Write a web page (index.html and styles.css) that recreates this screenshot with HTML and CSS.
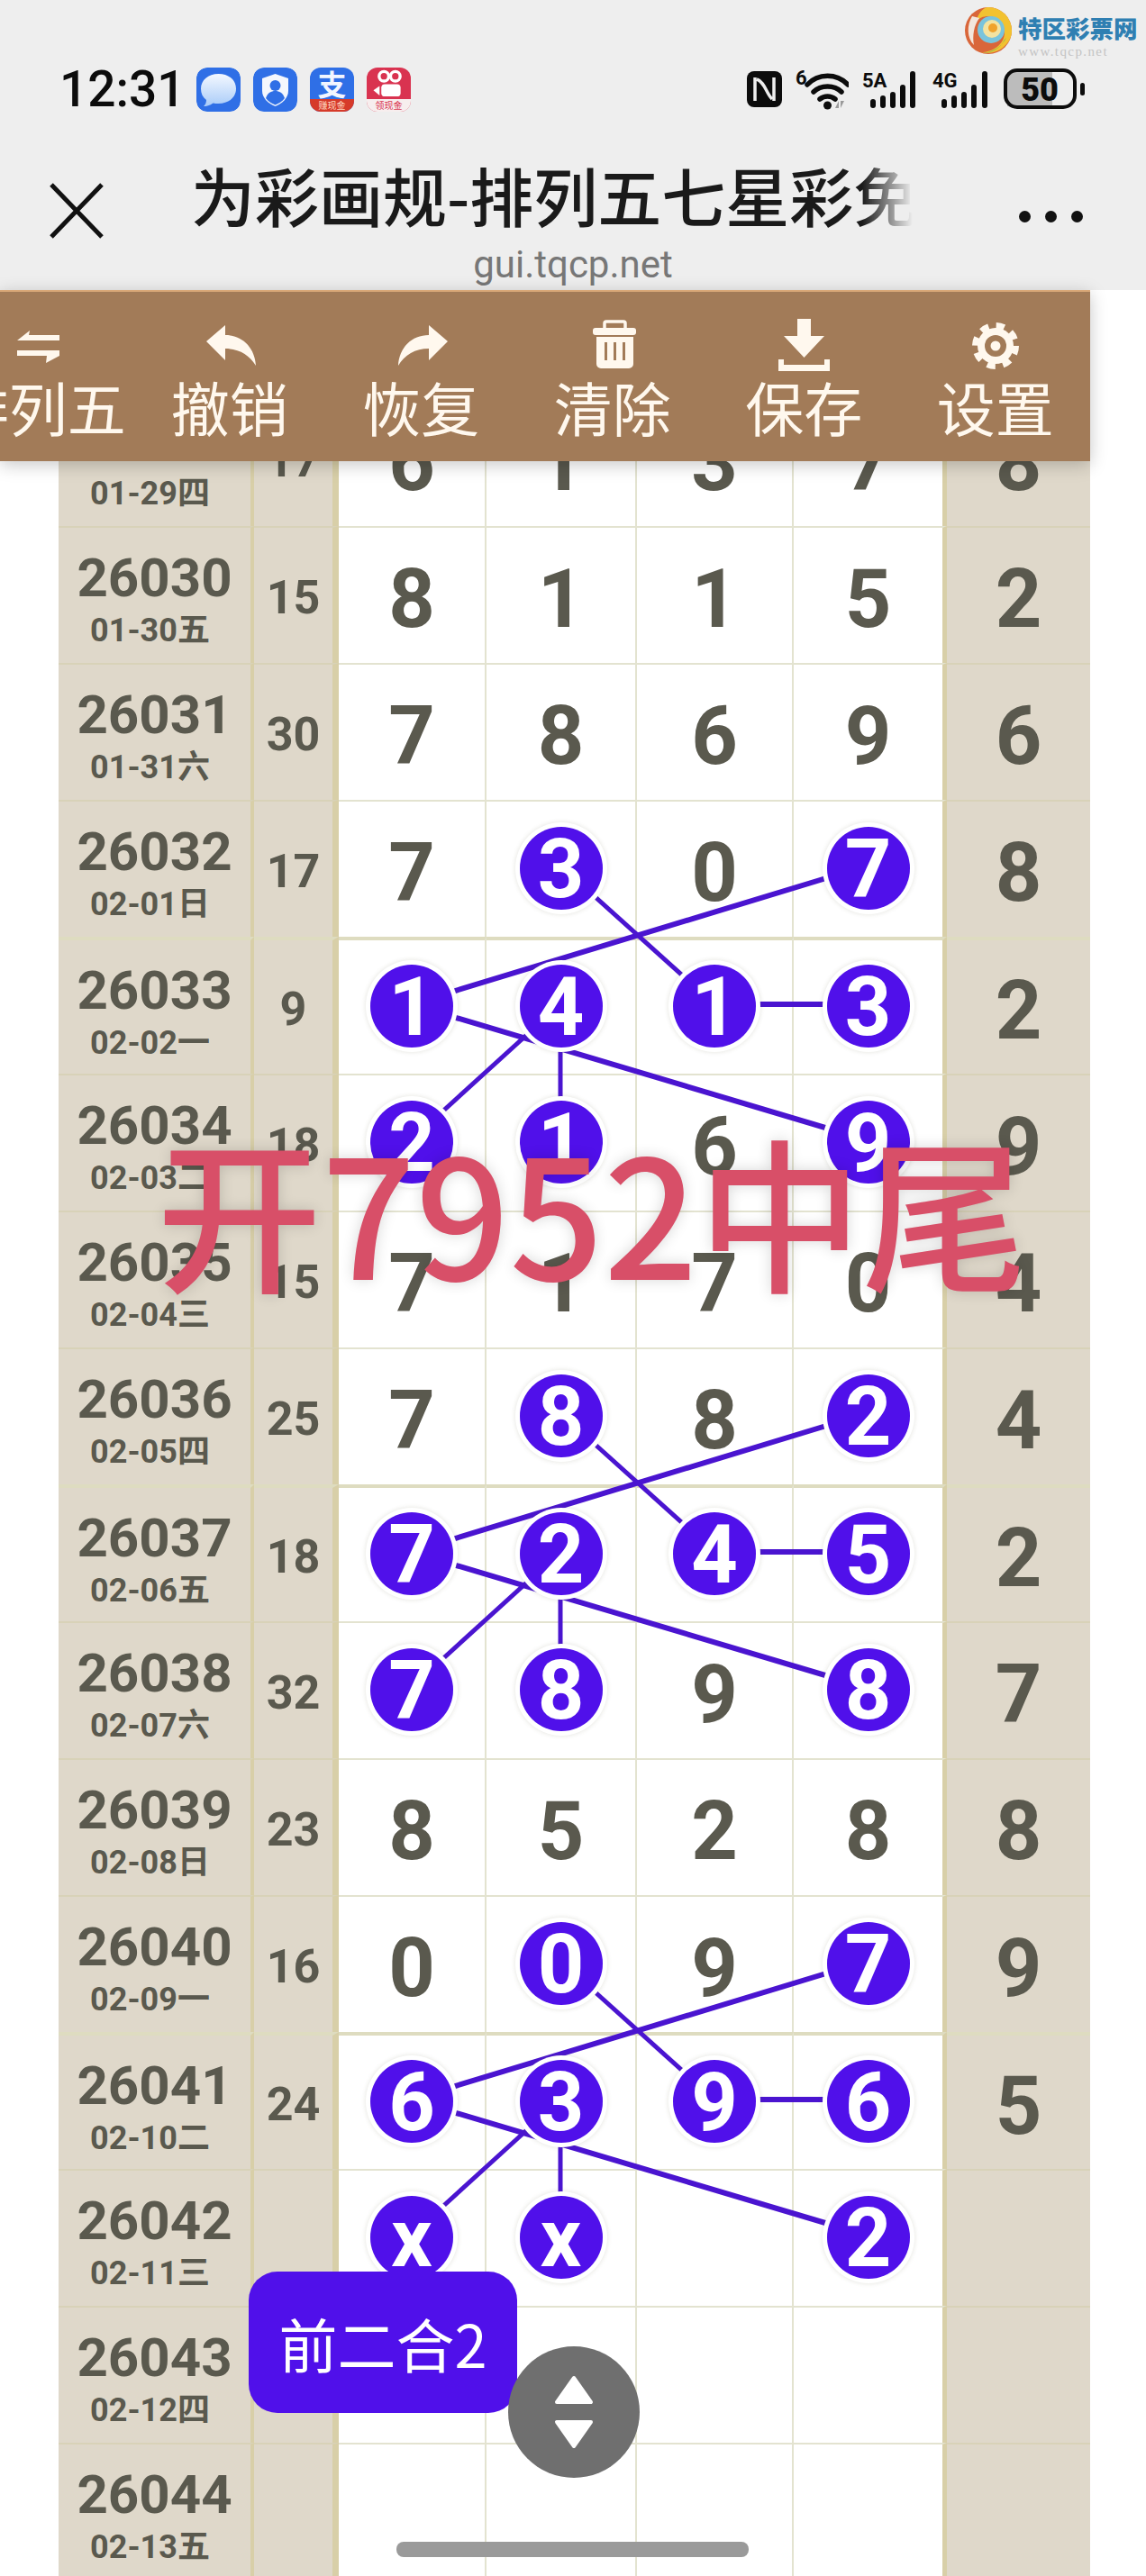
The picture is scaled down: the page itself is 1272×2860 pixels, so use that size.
FILE: index.html
```html
<!DOCTYPE html>
<html>
<head>
<meta charset="UTF-8">
<title>为彩画规-排列五七星彩免费</title>
<link rel="stylesheet" href="styles.css">
</head>
<body>
<div id="phone">

	<!-- top of the browser -->
	<div id="head">
		<div class="mark">
			<svg class="mark-logo" width="52" height="52" viewBox="0 0 52 52">
				<circle cx="26" cy="26" r="26" fill="#d9663a"/>
				<path d="M26 0a26 26 0 0 1 26 26c0 8-4 14-10 19-6 5-16 7-24 5 12 0 26-8 26-22 0-10-8-18-18-18-6 0-10 2-14 6 3-9 8-16 14-16z" fill="#f2c230"/>
				<path d="M44 36c-4 9-14 15-24 15 10-1 20-6 26-17z" fill="#5fb56c"/>
				<circle cx="29" cy="25" r="15" fill="#7ac4dc"/>
				<circle cx="30" cy="24" r="10" fill="#f4e3a0"/>
				<circle cx="31" cy="23" r="5" fill="#f0a32c"/>
				<path d="M8 10c-6 10-6 24 2 32-2-10 0-22 6-30z" fill="#f3e6dc"/>
			</svg>
			<div class="mark-text">
				<div class="mark-name">特区彩票网</div>
				<div class="mark-url">www.tqcp.net</div>
			</div>
		</div>

		<div id="status">
			<span class="time">12:31</span>
			<div class="apps">
				<svg class="app" viewBox="0 0 49 49">
					<defs><linearGradient id="bubble" x1="0" y1="0" x2="0" y2="1"><stop offset="0" stop-color="#f4f8ff"/><stop offset="1" stop-color="#a9ccf8"/></linearGradient></defs>
					<rect width="49" height="49" rx="12" fill="#2f6fe6"/>
					<path d="M24.5 7C36 7 44 14 44 23.500S36 40 24.500 40c-2 0-4 0-6-.6C15 42 11 43 8 43c2-2 3-4 3-7-4-3-6-7-6-12.500C5 14 13 7 24.500 7z" fill="url(#bubble)"/>
				</svg>
				<svg class="app" viewBox="0 0 49 49">
					<rect width="49" height="49" rx="12" fill="#2f6fe6"/>
					<path d="M24.500 7L39 12V26C39 34 32 40 24.500 43 17 40 10 34 10 26V12Z" fill="#f4f7fd"/>
					<circle cx="24.500" cy="20" r="6" fill="#2f6fe6"/>
					<path d="M14 34c2-6 6-8 10.500-8S33 28 35 34c-3 4-7 6-10.500 7.500C21 40 17 38 14 34z" fill="#2f6fe6"/>
				</svg>
				<div class="app app-pay">
					<span class="pay-top">支</span>
					<span class="pay-band">赚现金</span>
				</div>
				<div class="app app-kwai">
					<svg class="kwai-top" viewBox="0 0 49 36">
						<circle cx="19" cy="10" r="5.500" fill="none" stroke="#fff" stroke-width="3.500"/>
						<circle cx="32" cy="10" r="5.500" fill="none" stroke="#fff" stroke-width="3.500"/>
						<rect x="16" y="19" width="22" height="14" rx="4" fill="#fff"/>
						<path d="M7 26L14 21V32Z" fill="#fff"/>
					</svg>
					<span class="kwai-band">领现金</span>
				</div>
			</div>

			<div class="sys">
				<svg width="39" height="40" viewBox="0 0 39 40">
					<rect width="39" height="40" rx="8" fill="#0c0c0c"/>
					<path d="M9 7V33M30 7V33M11 9C20 12 21 24 28 31" fill="none" stroke="#eee" stroke-width="3.500"/>
				</svg>
				<svg width="59" height="46" viewBox="0 0 59 46">
					<text class="sys-tag" x="0" y="18">6</text>
					<path d="M13 18C25 5 46 5 58 18M20 26C28 18 43 18 51 26M27 34C32 30 39 30 44 34" fill="none" stroke="#0c0c0c" stroke-width="5.500" stroke-linecap="round"/>
					<circle cx="35.500" cy="41" r="4.500" fill="#0c0c0c"/>
					<path d="M44 44H48V36ZM50 36H54L50 44Z" fill="#9a9a9a"/>
				</svg>
				<svg width="60" height="46" viewBox="0 0 60 46">
					<text class="sys-tag" x="0" y="21">5A</text>
					<rect x="9" y="34" width="6" height="10" rx="3"/><rect x="20" y="30" width="6" height="14" rx="3"/><rect x="31" y="26" width="6" height="18" rx="3"/><rect x="42" y="18" width="6" height="26" rx="3"/><rect x="53" y="3" width="6" height="41" rx="3"/>
				</svg>
				<svg width="62" height="46" viewBox="0 0 62 46">
					<text class="sys-tag" x="0" y="21">4G</text>
					<rect x="10" y="34" width="6" height="10" rx="3"/><rect x="21" y="30" width="6" height="14" rx="3"/><rect x="32" y="26" width="6" height="18" rx="3"/><rect x="43" y="18" width="6" height="26" rx="3"/><rect x="55" y="3" width="6" height="41" rx="3"/>
				</svg>
				<svg width="90" height="46" viewBox="0 0 90 46">
					<rect x="4" y="4" width="50" height="38" fill="#bcbcbc"/>
					<rect x="2" y="2" width="77" height="41" rx="13" fill="none" stroke="#0c0c0c" stroke-width="4"/>
					<text class="sys-batt" x="40" y="36" text-anchor="middle">50</text>
					<rect x="85" y="16" width="5" height="14" rx="2.500"/>
				</svg>
			</div>
		</div>

		<div id="nav">
			<svg class="close" width="60" height="62" viewBox="0 0 60 62">
				<path d="M2 2L58 60M58 2L2 60" fill="none" stroke="#111" stroke-width="5"/>
			</svg>
			<div class="title">为彩画规-排列五七星彩免费</div>
			<div class="dots"><i></i><i></i><i></i></div>
		</div>
		<div class="url">gui.tqcp.net</div>
	</div>

	<!-- chart -->
	<div id="page">
		<div id="tools">
			<div class="tool">
				<svg width="60" height="60" viewBox="0 0 60 60"><path d="M7 26L21 15L20 20H54V26ZM7 37H54V43L39 51L40 43H7Z"/></svg>
				<span>排列五</span>
			</div>
			<div class="tool">
				<svg width="60" height="60" viewBox="0 0 60 60"><path d="M4 27L25 9V20C44 20 58 34 59 54C52 42 40 35 25 35V48Z"/></svg>
				<span>撤销</span>
			</div>
			<div class="tool">
				<svg width="60" height="60" viewBox="0 0 60 60"><path d="M60 27L39 9V20C20 20 6 34 5 54C12 42 24 35 39 35V48Z"/></svg>
				<span>恢复</span>
			</div>
			<div class="tool">
				<svg width="60" height="60" viewBox="0 0 60 60"><path d="M21 12V7a2 2 0 0 1 2-2H42a2 2 0 0 1 2 2V12" fill="none" stroke="#fff8ee" stroke-width="3.500"/><rect x="8" y="12" width="48" height="8" rx="3"/><path fill-rule="evenodd" d="M12 22H53V52a5 5 0 0 1-5 5H17a5 5 0 0 1-5-5ZM21 28V48H24V28ZM31 28V48H34V28ZM41 28V48H44V28Z"/></svg>
				<span>清除</span>
			</div>
			<div class="tool">
				<svg width="60" height="60" viewBox="0 0 60 60"><path d="M23 2H38V21H53L30.500 45L8 21H23ZM2 47H8V53H53V47H59V60H2Z"/></svg>
				<span>保存</span>
			</div>
			<div class="tool">
				<svg width="60" height="60" viewBox="0 0 60 60">
					<circle cx="30" cy="32" r="20"/>
					<circle cx="30" cy="32" r="22" fill="none" stroke="#fff8ee" stroke-width="8" stroke-dasharray="9 8.280"/>
					<circle cx="30" cy="32" r="12" fill="#a27b58"/>
					<circle cx="30" cy="32" r="5.500"/>
				</svg>
				<span>设置</span>
			</div>
		</div>

		<div id="board">
			<svg class="links" width="1145" height="2432" viewBox="0 0 1145 2432">
				<defs>
					<g id="cross">
						<path class="wide" d="M898 529L391 683"/>
						<path d="M557 529L728 683"/>
						<path class="wide" d="M728 683H898"/>
						<path d="M557 683L391 834"/>
						<path d="M557 683V834"/>
						<path class="wide" d="M391 683L898 834"/>
					</g>
				</defs>
				<use href="#cross"/>
				<use href="#cross" y="608"/>
				<use href="#cross" y="1216"/>
			</svg>

			<div class="row"><div class="no"><b>26029</b><small>01-29四</small></div><div class="sum">17</div><div class="n">6</div><div class="n">1</div><div class="n">3</div><div class="n last">7</div><div class="tail">8</div></div>
			<div class="row"><div class="no"><b>26030</b><small>01-30五</small></div><div class="sum">15</div><div class="n">8</div><div class="n">1</div><div class="n">1</div><div class="n last">5</div><div class="tail">2</div></div>
			<div class="row"><div class="no"><b>26031</b><small>01-31六</small></div><div class="sum">30</div><div class="n">7</div><div class="n">8</div><div class="n">6</div><div class="n last">9</div><div class="tail">6</div></div>
			<div class="row"><div class="no"><b>26032</b><small>02-01日</small></div><div class="sum">17</div><div class="n">7</div><div class="n"><span class="ball">3</span></div><div class="n">0</div><div class="n last"><span class="ball">7</span></div><div class="tail">8</div></div>
			<div class="row thick"><div class="no"><b>26033</b><small>02-02一</small></div><div class="sum">9</div><div class="n"><span class="ball">1</span></div><div class="n"><span class="ball">4</span></div><div class="n"><span class="ball">1</span></div><div class="n last"><span class="ball">3</span></div><div class="tail">2</div></div>
			<div class="row"><div class="no"><b>26034</b><small>02-03二</small></div><div class="sum">18</div><div class="n"><span class="ball">2</span></div><div class="n"><span class="ball">1</span></div><div class="n">6</div><div class="n last"><span class="ball">9</span></div><div class="tail">9</div></div>
			<div class="row"><div class="no"><b>26035</b><small>02-04三</small></div><div class="sum">15</div><div class="n">7</div><div class="n">1</div><div class="n">7</div><div class="n last">0</div><div class="tail">4</div></div>
			<div class="row"><div class="no"><b>26036</b><small>02-05四</small></div><div class="sum">25</div><div class="n">7</div><div class="n"><span class="ball">8</span></div><div class="n">8</div><div class="n last"><span class="ball">2</span></div><div class="tail">4</div></div>
			<div class="row thick"><div class="no"><b>26037</b><small>02-06五</small></div><div class="sum">18</div><div class="n"><span class="ball">7</span></div><div class="n"><span class="ball">2</span></div><div class="n"><span class="ball">4</span></div><div class="n last"><span class="ball">5</span></div><div class="tail">2</div></div>
			<div class="row"><div class="no"><b>26038</b><small>02-07六</small></div><div class="sum">32</div><div class="n"><span class="ball">7</span></div><div class="n"><span class="ball">8</span></div><div class="n">9</div><div class="n last"><span class="ball">8</span></div><div class="tail">7</div></div>
			<div class="row"><div class="no"><b>26039</b><small>02-08日</small></div><div class="sum">23</div><div class="n">8</div><div class="n">5</div><div class="n">2</div><div class="n last">8</div><div class="tail">8</div></div>
			<div class="row"><div class="no"><b>26040</b><small>02-09一</small></div><div class="sum">16</div><div class="n">0</div><div class="n"><span class="ball">0</span></div><div class="n">9</div><div class="n last"><span class="ball">7</span></div><div class="tail">9</div></div>
			<div class="row thick"><div class="no"><b>26041</b><small>02-10二</small></div><div class="sum">24</div><div class="n"><span class="ball">6</span></div><div class="n"><span class="ball">3</span></div><div class="n"><span class="ball">9</span></div><div class="n last"><span class="ball">6</span></div><div class="tail">5</div></div>
			<div class="row"><div class="no"><b>26042</b><small>02-11三</small></div><div class="sum"></div><div class="n"><span class="ball">x</span></div><div class="n"><span class="ball">x</span></div><div class="n"></div><div class="n last"><span class="ball">2</span></div><div class="tail"></div></div>
			<div class="row"><div class="no"><b>26043</b><small>02-12四</small></div><div class="sum"></div><div class="n"></div><div class="n"></div><div class="n"></div><div class="n last"></div><div class="tail"></div></div>
			<div class="row"><div class="no"><b>26044</b><small>02-13五</small></div><div class="sum"></div><div class="n"></div><div class="n"></div><div class="n"></div><div class="n last"></div><div class="tail"></div></div>
		</div>
	</div>

	<div class="stamp">开7952中尾</div>
	<div class="tip">前二合2</div>
	<div class="updown">
		<svg width="44" height="82" viewBox="0 0 44 82">
			<path d="M22 3L41 30H3ZM3 52H41L22 79Z" fill="#fff" stroke="#fff" stroke-width="4" stroke-linejoin="round"/>
		</svg>
	</div>
	<div class="homebar"></div>
</div>
</body>
</html>
```

FILE: styles.css
```css
html, body {
	margin: 0;
	background-color: #ffffff;
}

#phone {
	position: relative;
	width: 1272px;
	height: 2860px;
	overflow: hidden;
	font-family: Roboto, "Noto Sans CJK SC", sans-serif;
}

/* browser head */
#head {
	position: relative;
	height: 322px;
	background-color: #eeeeee;
	box-sizing: border-box;
	padding-top: 74px;
}

.mark {
	position: absolute;
	top: 8px;
	left: 1071px;
	display: flex;
	gap: 7px;
}

.mark-name {
	margin-top: 8px;
	font-family: "Noto Sans CJK SC", sans-serif;
	font-size: 26.500px;
	font-weight: 900;
	line-height: 30px;
	white-space: nowrap;
	color: #2f7fb2;
}

.mark-url {
	margin-top: 3px;
	font-family: "Liberation Serif", serif;
	font-size: 15px;
	line-height: 16px;
	letter-spacing: 1.400px;
	color: #c4c4c4;
}

#status {
	display: flex;
	align-items: center;
	height: 50px;
	padding-left: 66px;
}

.time {
	width: 132px;
	font-size: 55px;
	font-weight: 500;
	color: #0c0c0c;
	white-space: nowrap;
}

.apps {
	display: flex;
	gap: 14px;
	margin-left: 20px;
}

.app {
	display: block;
	width: 49px;
	height: 49px;
	border-radius: 12px;
	overflow: hidden;
}

.app-pay {
	background-color: #2f6fe6;
	text-align: center;
}

.pay-top {
	display: block;
	height: 35px;
	font-family: "Noto Sans CJK SC", sans-serif;
	font-size: 32px;
	font-weight: 700;
	line-height: 35px;
	color: #f2f6ff;
}

.pay-band, .kwai-band {
	display: block;
	height: 14px;
	font-family: "Noto Sans CJK SC", sans-serif;
	font-size: 10px;
	line-height: 14px;
	text-align: center;
}

.pay-band {
	background-color: #d63a2a;
	color: #ffd9c0;
}

.app-kwai {
	background-color: #d93350;
}

.kwai-top {
	display: block;
	width: 49px;
	height: 35px;
}

.kwai-band {
	background-color: #f7eeee;
	color: #d93350;
}

.sys {
	display: flex;
	align-items: center;
	gap: 15px;
	margin-left: auto;
	margin-right: 68px;
}

.sys svg {
	display: block;
	fill: #0c0c0c;
}

.sys svg:nth-child(4) {
	margin-left: 3px;
}

.sys svg:nth-child(5) {
	margin-left: 2px;
}

.sys-tag {
	font-size: 22px;
	font-weight: 700;
}

.sys-batt {
	font-size: 36px;
	font-weight: 900;
}

#nav {
	display: flex;
	align-items: center;
	height: 80px;
	margin-top: 51px;
}

.close {
	margin-left: 55px;
	margin-top: 38px;
	flex: none;
}

.title {
	width: 801px;
	margin-left: 97px;
	font-family: "Noto Sans CJK SC", sans-serif;
	font-size: 71px;
	font-weight: 500;
	line-height: 80px;
	color: #1a1a1a;
	white-space: nowrap;
	overflow: hidden;
	-webkit-mask-image: linear-gradient(to right, #000 93%, transparent);
	mask-image: linear-gradient(to right, #000 93%, transparent);
}

.dots {
	display: flex;
	gap: 16px;
	margin-left: 118px;
	margin-top: 50px;
}

.dots i {
	width: 13px;
	height: 13px;
	border-radius: 50%;
	background-color: #111111;
}

.url {
	margin-top: 14px;
	font-size: 42px;
	line-height: 50px;
	text-align: center;
	color: #777777;
}

/* tool bar over the chart */
#page {
	position: relative;
}

#tools {
	position: absolute;
	top: 0;
	left: 0;
	z-index: 5;
	display: flex;
	width: 1210px;
	height: 190px;
	box-sizing: border-box;
	border-top: 2px solid #d9a878;
	background-color: #a27b58;
	box-shadow: 0 4px 18px rgba(0, 0, 0, 0.22);
	overflow: hidden;
}

.tool {
	flex: none;
	display: flex;
	flex-direction: column;
	align-items: center;
	width: 212.500px;
	padding-top: 28px;
	color: #fff8ee;
}

.tool:first-child {
	margin-left: -64px;
}

.tool svg {
	fill: #fff8ee;
}

.tool span {
	font-family: "Noto Sans CJK SC", sans-serif;
	font-size: 65px;
	line-height: 78px;
	white-space: nowrap;
}

/* chart */
#board {
	position: relative;
	width: 1145px;
	margin-left: 65px;
	padding-top: 110px;
}

.links {
	position: absolute;
	top: 110px;
	left: 0;
	z-index: 1;
}

.links path {
	fill: none;
	stroke: #4a14d0;
	stroke-width: 5px;
}

.links .wide {
	stroke-width: 6px;
}

.row {
	display: grid;
	grid-template-columns: 217px 94px 164px 167px 174px 170px 159px;
	height: 152px;
	box-sizing: border-box;
	color: #5a594e;
}

.row > div {
	display: flex;
	align-items: center;
	justify-content: center;
	box-sizing: border-box;
	border-top: 2px solid #e3e3d0;
	border-right: 2px solid #e3e3d0;
}

.row.thick > div {
	border-top: 4px solid #dedcc0;
}

.row .no, .row .sum, .row .tail {
	background-color: #dfd8ca;
	border-top-color: #d8d2b8;
}

.row .no {
	flex-direction: column;
	justify-content: flex-start;
	padding-top: 26px;
	border-right: 4px solid #d8cfa8;
}

.row .sum {
	padding-top: 4px;
	border-right: 7px solid #d8cfa8;
	font-size: 52px;
	font-weight: 700;
}

.row .n, .row .tail {
	padding-top: 8px;
	font-size: 90px;
	font-weight: 700;
}

.row .n.last {
	border-right: 5px solid #d8cfa8;
}

.row .tail {
	border-right: none;
}

.no b {
	font-size: 60px;
	font-weight: 700;
	line-height: 60px;
}

.no small {
	margin-right: 10px;
	font-size: 36px;
	font-weight: 700;
	line-height: 56px;
}

.ball {
	position: relative;
	z-index: 2;
	display: flex;
	align-items: center;
	justify-content: center;
	box-sizing: border-box;
	width: 92px;
	height: 92px;
	margin-top: -11px;
	padding-top: 4px;
	border-radius: 50%;
	background-color: #5010ea;
	box-shadow: 0 0 0 5px #ffffff, 0 0 4px 6px rgba(90, 90, 60, 0.12);
	color: #ffffff;
	line-height: 88px;
}

/* things lying over the chart */
.stamp {
	position: absolute;
	top: 1232px;
	left: 174px;
	z-index: 6;
	font-family: "Noto Sans CJK SC", sans-serif;
	font-size: 183px;
	font-weight: 500;
	line-height: 220px;
	white-space: nowrap;
	color: #d84f68;
	text-shadow: 0 0 16px rgba(0, 0, 0, 0.16);
}

.tip {
	position: absolute;
	top: 2522px;
	left: 276px;
	z-index: 6;
	display: flex;
	align-items: center;
	justify-content: center;
	width: 298px;
	height: 157px;
	border-radius: 32px;
	background-color: #5010ea;
	font-family: "Noto Sans CJK SC", sans-serif;
	font-size: 65px;
	color: #ffffff;
	white-space: nowrap;
}

.updown {
	position: absolute;
	top: 2605px;
	left: 564px;
	z-index: 6;
	display: flex;
	align-items: center;
	justify-content: center;
	width: 146px;
	height: 146px;
	border-radius: 50%;
	background-color: #6f6f6f;
}

.homebar {
	position: absolute;
	top: 2822px;
	left: 440px;
	z-index: 6;
	width: 391px;
	height: 17px;
	border-radius: 8px;
	background-color: #9a9a9a;
}
```
